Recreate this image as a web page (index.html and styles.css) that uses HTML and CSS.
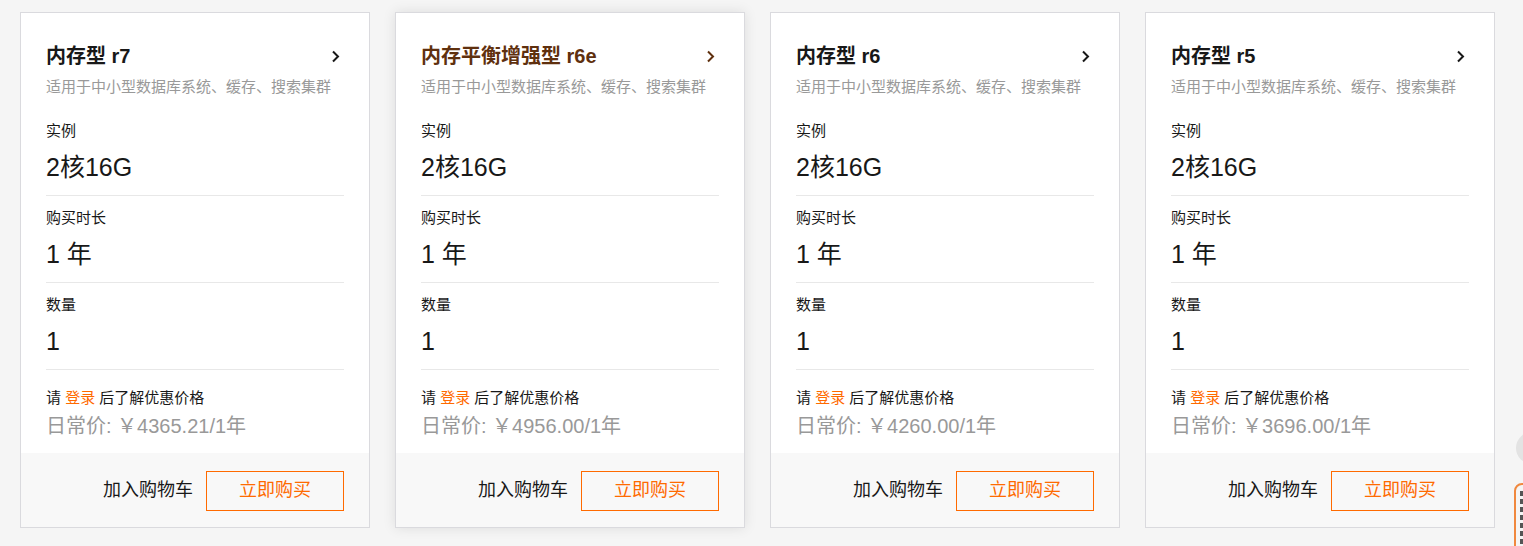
FILE: index.html
```html
<!DOCTYPE html>
<html lang="zh-CN">
<head>
<meta charset="utf-8">
<title>内存型实例</title>
<link rel="stylesheet" href="styles.css">
</head>
<body>
<div class="cards">
  <div class="card">
    <div class="card-body">
      <div class="title-row"><span class="title">内存型 r7</span><svg class="chev" width="9" height="13" viewBox="0 0 9 13"><path d="M2 1.5 L7 6.5 L2 11.5" fill="none" stroke="#181818" stroke-width="2"/></svg></div>
      <div class="sub">适用于中小型数据库系统、缓存、搜索集群</div>
      <div class="sec"><div class="label">实例</div><div class="value">2核16G</div></div>
      <div class="sec"><div class="label">购买时长</div><div class="value">1 年</div></div>
      <div class="sec"><div class="label">数量</div><div class="value">1</div></div>
      <div class="login">请 <span class="orange">登录</span> 后了解优惠价格</div>
      <div class="price">日常价: ￥4365.21/1年</div>
    </div>
    <div class="card-foot"><span class="cart">加入购物车</span><span class="buy">立即购买</span></div>
  </div>
  <div class="card hover">
    <div class="card-body">
      <div class="title-row"><span class="title">内存平衡增强型 r6e</span><svg class="chev" width="9" height="13" viewBox="0 0 9 13"><path d="M2 1.5 L7 6.5 L2 11.5" fill="none" stroke="#5f300e" stroke-width="2"/></svg></div>
      <div class="sub">适用于中小型数据库系统、缓存、搜索集群</div>
      <div class="sec"><div class="label">实例</div><div class="value">2核16G</div></div>
      <div class="sec"><div class="label">购买时长</div><div class="value">1 年</div></div>
      <div class="sec"><div class="label">数量</div><div class="value">1</div></div>
      <div class="login">请 <span class="orange">登录</span> 后了解优惠价格</div>
      <div class="price">日常价: ￥4956.00/1年</div>
    </div>
    <div class="card-foot"><span class="cart">加入购物车</span><span class="buy">立即购买</span></div>
  </div>
  <div class="card">
    <div class="card-body">
      <div class="title-row"><span class="title">内存型 r6</span><svg class="chev" width="9" height="13" viewBox="0 0 9 13"><path d="M2 1.5 L7 6.5 L2 11.5" fill="none" stroke="#181818" stroke-width="2"/></svg></div>
      <div class="sub">适用于中小型数据库系统、缓存、搜索集群</div>
      <div class="sec"><div class="label">实例</div><div class="value">2核16G</div></div>
      <div class="sec"><div class="label">购买时长</div><div class="value">1 年</div></div>
      <div class="sec"><div class="label">数量</div><div class="value">1</div></div>
      <div class="login">请 <span class="orange">登录</span> 后了解优惠价格</div>
      <div class="price">日常价: ￥4260.00/1年</div>
    </div>
    <div class="card-foot"><span class="cart">加入购物车</span><span class="buy">立即购买</span></div>
  </div>
  <div class="card">
    <div class="card-body">
      <div class="title-row"><span class="title">内存型 r5</span><svg class="chev" width="9" height="13" viewBox="0 0 9 13"><path d="M2 1.5 L7 6.5 L2 11.5" fill="none" stroke="#181818" stroke-width="2"/></svg></div>
      <div class="sub">适用于中小型数据库系统、缓存、搜索集群</div>
      <div class="sec"><div class="label">实例</div><div class="value">2核16G</div></div>
      <div class="sec"><div class="label">购买时长</div><div class="value">1 年</div></div>
      <div class="sec"><div class="label">数量</div><div class="value">1</div></div>
      <div class="login">请 <span class="orange">登录</span> 后了解优惠价格</div>
      <div class="price">日常价: ￥3696.00/1年</div>
    </div>
    <div class="card-foot"><span class="cart">加入购物车</span><span class="buy">立即购买</span></div>
  </div>
</div>
<div class="float-circle"></div>
<div class="float-tab"><div class="tab-inner"></div></div>
</body>
</html>
```

FILE: styles.css
```css
html, body {
  margin: 0;
  padding: 0;
  background: #f5f5f5;
  font-family: "Liberation Sans", "Noto Sans CJK SC", sans-serif;
  color: #181818;
  overflow: hidden;
}
.cards {
  display: flex;
  gap: 25px;
  padding: 12px 20px;
}
.card {
  width: 350px;
  height: 516px;
  box-sizing: border-box;
  border: 1px solid #dadade;
  background: #fff;
  display: flex;
  flex-direction: column;
}
.card.hover {
  box-shadow: 0 0 12px rgba(0, 0, 0, 0.1);
}
.card-body {
  flex: 1;
  padding: 31px 25px 0 25px;
}
.title-row {
  display: flex;
  justify-content: space-between;
  align-items: center;
  height: 24px;
}
.title {
  font-size: 20px;
  font-weight: bold;
  line-height: 24px;
}
.hover .title {
  color: #5f300e;
}
.chev {
  margin-right: 4px;
}
.sub {
  margin-top: 9px;
  font-size: 15px;
  line-height: 20px;
  color: #999;
  margin-bottom: 12px;
}
.sec {
  padding: 12px 0 12px;
  border-bottom: 1px solid #e8e8e8;
}
.label {
  font-size: 15px;
  line-height: 20px;
}
.value {
  margin-top: 10px;
  font-size: 25px;
  line-height: 32px;
}
.login {
  margin-top: 18px;
  font-size: 15px;
  line-height: 20px;
}
.orange {
  color: #ff6a00;
}
.price {
  margin-top: 4px;
  font-size: 20px;
  line-height: 28px;
  color: #999;
}
.card-foot {
  height: 74px;
  box-sizing: border-box;
  background: #f8f8f8;
  display: flex;
  justify-content: flex-end;
  align-items: center;
  padding: 1px 25px 0;
  gap: 13px;
}
.cart {
  font-size: 18px;
  line-height: 24px;
  margin-top: -1px;
}
.buy {
  width: 138px;
  height: 40px;
  box-sizing: border-box;
  border: 1px solid #ff6a00;
  color: #ff6a00;
  font-size: 18px;
  line-height: 24px;
  padding-bottom: 1px;
  display: flex;
  align-items: center;
  justify-content: center;
}
.float-circle {
  position: absolute;
  left: 1516px;
  top: 432px;
  width: 32px;
  height: 32px;
  border-radius: 50%;
  background: #e3e3e3;
}
.float-tab {
  position: absolute;
  left: 1514px;
  top: 483px;
  width: 40px;
  height: 80px;
  box-sizing: border-box;
  border: 2px solid #f0883e;
  border-radius: 8px;
  background: #f5f5f5;
  padding: 6px 4px;
}
.tab-inner {
  width: 4px;
  height: 60px;
  background: repeating-linear-gradient(#555 0 5px, #f5f5f5 5px 8px);
}
```
